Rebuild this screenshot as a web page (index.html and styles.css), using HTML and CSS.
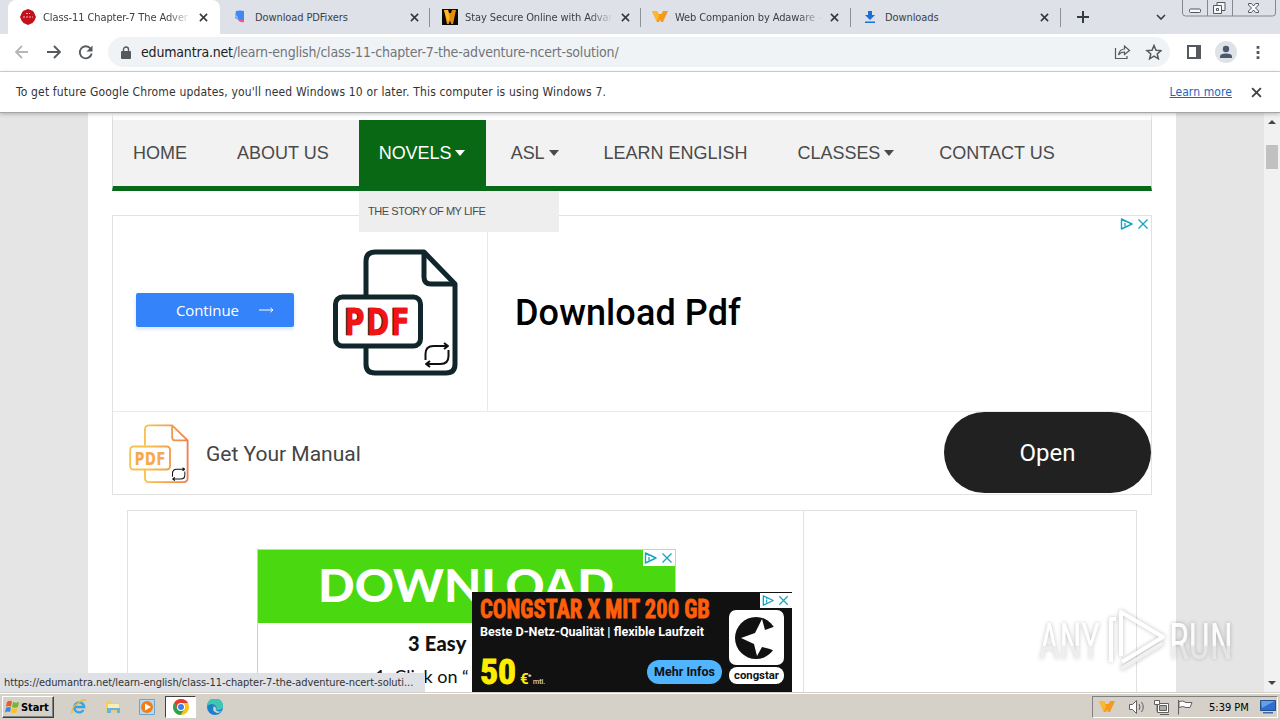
FILE: index.html
```
<!DOCTYPE html>
<html lang="en">
<head>
    <meta charset="UTF-8">
    <meta name="viewport" content="width=device-width, initial-scale=1.0">
    <title>Class-11 Chapter-7 The Adventure</title>
    <link rel="stylesheet" href="styles.css">
</head>
<body>

    <!-- Shared icons -->
    <svg class="sprite">
        <symbol id="x" viewBox="0 0 10 10"><path d="M1 1l8 8M9 1l-8 8" fill="none" stroke="currentColor" stroke-width="1.7"/></symbol>
        <symbol id="w" viewBox="0 0 16 12"><path d="M0 0h5l1.500 3H9.500L11 0h5l-5 11H9L8 8.500 7 11H5z" fill="#f79a1c"/><path d="M0 0h5l2 5-2 5z" fill="#fdb92a"/></symbol>
        <symbol id="adchoices" viewBox="0 0 32 16">
            <path d="M2.500 3v10L13 8z" fill="none" stroke="currentColor" stroke-width="1.400" stroke-linejoin="round"/>
            <path d="M6 7v3.500M6 5v1" stroke="currentColor" stroke-width="1.300"/>
            <path d="M19.500 3.500l9 9M28.500 3.500l-9 9" stroke="currentColor" stroke-width="1.300"/>
        </symbol>
        <symbol id="sync" viewBox="0 0 26 26">
            <path d="M1.500 18v-6q0-8 8-8h14M20 1l4 3-4 3M24.500 8v6q0 8-8 8H2M6 19l-4 3 4 3" fill="none" stroke="#111" stroke-width="2"/>
        </symbol>
    </svg>

    <!-- Tab strip -->
    <div class="tabs">
        <div class="tab active">
            <svg class="favicon" viewBox="0 0 16 16"><path d="M8 0l2.500 1 2.500 1 1.500 2.500L16 8l-1.500 3.500L12.500 14 8 16l-4.500-2-2-2.500L0 8l1.500-3.500L3 2l2.500-1z" fill="#c3111c"/><path d="M3 8h10M6 4.500h4" stroke="#f3b5b5" stroke-width="1" stroke-dasharray="2 1"/></svg>
            <span class="tab-title fade">Class-11 Chapter-7 The Adver</span>
            <svg class="close"><use href="#x"/></svg>
        </div>
        <div class="tab">
            <svg class="favicon" viewBox="0 0 16 16"><path d="M4 2q4-1 8 0v9H7L3 9z" fill="#4388f2"/><path d="M3 5l3 3v2L3 8z" fill="#8db8f8"/><path d="M6 11h6v2q-4 1-6-2z" fill="#ef5a86"/></svg>
            <span class="tab-title">Download PDFixers</span>
            <svg class="close"><use href="#x"/></svg>
        </div>
        <div class="tab">
            <svg class="favicon" viewBox="0 0 16 16"><path d="M0 0h16v16H0z" fill="#0c0a06"/><path d="M2 1h4l1 3h2l1-3h4l-3 14H9.300L8 11.500 6.700 15H5z" fill="#e88c0e"/><path d="M2 1h4l1.500 8L6 14z" fill="#fdb92a"/></svg>
            <span class="tab-title fade">Stay Secure Online with Advar</span>
            <svg class="close"><use href="#x"/></svg>
        </div>
        <div class="tab">
            <svg class="favicon" viewBox="0 -2 16 16"><use href="#w" width="16" height="12"/></svg>
            <span class="tab-title fade">Web Companion by Adaware -</span>
            <svg class="close"><use href="#x"/></svg>
        </div>
        <div class="tab">
            <svg class="favicon" viewBox="0 0 16 16"><path d="M6 2h4v4h3l-5 5-5-5h3zM3 12.500h10V14H3z" fill="#1b6fd8"/></svg>
            <span class="tab-title">Downloads</span>
            <svg class="close"><use href="#x"/></svg>
        </div>
        <svg class="plus" viewBox="0 0 12 12"><path d="M6 0v12M0 6h12" stroke="#333b45" stroke-width="2"/></svg>
        <svg class="chevron" viewBox="0 0 10 6"><path d="M1 1l4 4 4-4" fill="none" stroke="#333b45" stroke-width="1.600"/></svg>
        <svg class="window-buttons" viewBox="0 0 94 17">
            <path d="M.5 0v13q0 3 3 3h87q3 0 3-3V0M25.500 0v16M50.500 0v16" fill="none" stroke="#85888d"/>
            <g fill="#f7f8fa" stroke="#55585e">
                <rect x="7.500" y="9" width="11" height="3.500" rx="1"/>
                <path d="M35 2.500h8v8h-8z"/><path d="M31.500 5.500h8v8h-8zM34.500 8.500h2v2h-2z"/>
                <path d="M66.500 3.500h3l2 2.500 2-2.500h3v1.500L73.500 8l3 3v1.500h-3l-2-2.500-2 2.500h-3V11l3-3-3-3z"/>
            </g>
        </svg>
    </div>

    <!-- Toolbar -->
    <div class="toolbar">
        <svg class="arrows" viewBox="0 0 80 16" fill="none" stroke-width="1.800">
            <path d="M14 8H2M8 2L2 8l6 6" stroke="#b4b6b9"/>
            <path d="M33 8h12M40 2l6 6-6 6" stroke="#55585c"/>
            <path d="M76.500 4.500a6 6 0 1 0 1.200 5" stroke="#55585c"/><path d="M78.500 1.500v6h-6z" fill="#55585c"/>
        </svg>
        <div class="address">
            <svg class="lock" viewBox="0 0 10 13"><path d="M1 5h8q1 0 1 1v6q0 1-1 1H1q-1 0-1-1V6q0-1 1-1z" fill="#55585c"/><path d="M2.500 6V3.500a2.500 2.500 0 0 1 5 0V6" fill="none" stroke="#55585c" stroke-width="1.400"/></svg>
            <span class="url"><b>edumantra.net</b>/learn-english/class-11-chapter-7-the-adventure-ncert-solution/</span>
            <svg class="share" viewBox="0 0 48 16" fill="none" stroke="#55585c" stroke-width="1.200">
                <path d="M1.500 4v10.500H13V12M4.500 11q1-6 6-6V2l5 4.500-5 4V8q-4 0-6 3z"/>
                <path d="M40 1.500l2 4.700 5 .4-3.800 3.300 1.200 4.900L40 12.200l-4.400 2.600 1.200-4.900L33 6.600l5-.4z" stroke-width="1.500"/>
            </svg>
        </div>
        <svg class="side" viewBox="0 0 14 14"><path d="M1 1h12v12H1z" fill="none" stroke="#55585c" stroke-width="2"/><path d="M9 1h4v12H9z" fill="#55585c"/></svg>
        <svg class="profile" viewBox="0 0 22 22"><circle cx="11" cy="11" r="11" fill="#dfe2e7"/><circle cx="11" cy="8" r="3.200" fill="#4c5770"/><path d="M5 17v-1.500q0-3 6-3t6 3V17z" fill="#4c5770"/></svg>
        <svg class="dots" viewBox="0 0 4 14" fill="#55585c"><path d="M.5 0h3v3h-3zM.5 5.500h3v3h-3zM.5 11h3v3h-3z"/></svg>
    </div>

    <!-- Update notice -->
    <div class="infobar">
        <span class="notice">To get future Google Chrome updates, you'll need Windows 10 or later. This computer is using Windows 7.</span>
        <a class="learn" href="#">Learn more</a>
        <svg class="info-close"><use href="#x"/></svg>
    </div>

    <!-- Web page -->
    <div class="view">
        <div class="page">
            <nav class="nav">
                <a class="item">HOME</a>
                <a class="item">ABOUT US</a>
                <a class="item open">NOVELS<i class="caret"></i></a>
                <a class="item">ASL<i class="caret"></i></a>
                <a class="item">LEARN ENGLISH</a>
                <a class="item">CLASSES<i class="caret"></i></a>
                <a class="item">CONTACT US</a>
                <div class="submenu">THE STORY OF MY LIFE</div>
            </nav>

            <div class="ad">
                <div class="ad-top">
                    <div class="ad-media">
                        <div class="continue">Continue
                            <svg class="arrow" viewBox="0 0 15 6"><path d="M0 3h14M11.500.800L14 3l-2.500 2.200" fill="none" stroke="#fff" stroke-width="1"/></svg>
                        </div>
                        <svg class="pdf" viewBox="0 0 128 128" fill="none" stroke="#10262b" stroke-width="5" stroke-linejoin="round">
                            <path d="M34 46V12q0-9 9-9h49l31 32v80q0 9-9 9H43q-9 0-9-9V98"/>
                            <path d="M92 3v25q0 7 7 7h24"/>
                            <rect x="3.500" y="48" width="85" height="49" rx="7"/>
                            <text class="pdf-shadow" x="11.500" y="86" textLength="67" lengthAdjust="spacingAndGlyphs">PDF</text>
                            <text class="pdf-text" x="12.500" y="86" textLength="67" lengthAdjust="spacingAndGlyphs">PDF</text>
                            <use href="#sync" x="92" y="93" width="26" height="26"/>
                        </svg>
                    </div>
                    <div class="ad-title">Download Pdf</div>
                    <svg class="choices"><use href="#adchoices"/></svg>
                </div>
                <div class="ad-bottom">
                    <svg class="pdf-small" viewBox="0 0 128 128" fill="none" stroke="url(#warm)" stroke-width="4" stroke-linejoin="round">
                        <defs><linearGradient id="warm" gradientUnits="userSpaceOnUse" x1="0" y1="0" x2="128" y2="0"><stop offset=".3" stop-color="#f8c24e"/><stop offset="1" stop-color="#f08050"/></linearGradient></defs>
                        <path d="M34 46V12q0-9 9-9h49l33 32v80q0 9-9 9H43q-9 0-9-9V98M92 3v25q0 7 7 7h26"/>
                        <rect x="2.500" y="48" width="85" height="49" rx="7"/>
                        <text class="pdf-warm" x="12" y="87" textLength="67" lengthAdjust="spacingAndGlyphs">PDF</text>
                        <use href="#sync" x="91" y="92" width="30" height="30"/>
                    </svg>
                    <span class="manual">Get Your Manual</span>
                    <a class="open-btn">Open</a>
                </div>
            </div>

            <div class="content">
                <div class="main">
                    <div class="green-ad">
                        <svg class="choices boxed"><use href="#adchoices"/></svg>
                        <div class="download"><svg viewBox="0 0 417 73"><text x="60" y="52" textLength="296" lengthAdjust="spacingAndGlyphs">DOWNLOAD</text></svg></div>
                        <div class="steps">3 Easy</div>
                        <div class="step">1. Click on “</div>
                    </div>
                </div>
                <div class="sidebar"></div>
            </div>
        </div>

        <div class="scroll"><i class="up"></i><i class="thumb"></i><i class="down"></i></div>

        <!-- Sticky banner -->
        <div class="banner">
            <svg viewBox="0 0 320 100">
                <text class="headline" x="8" y="26" textLength="230" lengthAdjust="spacingAndGlyphs">CONGSTAR X MIT 200 GB</text>
                <text class="subline" x="8" y="44" textLength="224" lengthAdjust="spacingAndGlyphs">Beste D-Netz-Qualität | flexible Laufzeit</text>
                <text class="price" x="8" y="92" textLength="36" lengthAdjust="spacingAndGlyphs">50</text>
                <text class="euro" x="48" y="92">€</text>
                <text class="tiny" x="56" y="87">*</text>
                <text class="tiny" x="61" y="92" textLength="12" lengthAdjust="spacingAndGlyphs">mtl.</text>
                <rect x="175" y="68" width="75" height="24" rx="12" fill="#50b4ff"/>
                <text class="more" x="182" y="84" textLength="61" lengthAdjust="spacingAndGlyphs">Mehr Infos</text>
                <rect x="257" y="18" width="55" height="55" rx="7" fill="#fff"/>
                <circle cx="284" cy="46" r="21" fill="#111"/>
                <path d="M290 27l3 11 14-5v28l-9-4-8-2-5 9-3-12-13-6 14-5z" fill="#fff"/>
                <rect x="257" y="75" width="55" height="17" rx="8" fill="#fff"/>
                <text class="brand" x="262" y="87" textLength="45" lengthAdjust="spacingAndGlyphs">congstar</text>
            </svg>
            <svg class="choices boxed"><use href="#adchoices"/></svg>
        </div>

        <div class="status">https://edumantra.net/learn-english/class-11-chapter-7-the-adventure-ncert-soluti...</div>

        <svg class="watermark" viewBox="0 0 200 70">
            <defs><linearGradient id="fade" x1="0" y1="0" x2="0" y2="1"><stop offset=".55" stop-color="#fff"/><stop offset=".58" stop-color="#eee" stop-opacity=".75"/></linearGradient></defs>
            <text x="2" y="52" textLength="61" lengthAdjust="spacingAndGlyphs">ANY</text>
            <g fill="none" stroke="#fff" stroke-width="4" stroke-linejoin="round"><path d="M74 55V12h5M84 49V5l42 25-41 25"/><path d="M84 62l42-26" stroke="#eee"/></g>
            <text x="132" y="52" textLength="64" lengthAdjust="spacingAndGlyphs">RUN</text>
        </svg>
    </div>

    <!-- Taskbar -->
    <div class="taskbar">
        <div class="start">
            <svg viewBox="0 0 16 16"><path d="M2 3q3-2 5-.500L6 7.500q-3-1-5 .5z" fill="#ec5b25"/><path d="M8 3q3 1.500 6 0l-1 5q-3 1.500-6 0z" fill="#72b72d"/><path d="M1 9q2-1.500 5-.500L5 13q-2.500-1-5 .5z" fill="#3b88dc"/><path d="M7 9q3 1.500 5.500 0l-1 4.500q-3 1.500-5.500 0z" fill="#f8c329"/></svg>
            Start
        </div>
        <div class="launch">
            <svg viewBox="0 0 16 16"><path d="M12.500 11a5 5 0 1 1 .7-3H4" fill="none" stroke="#38a2e2" stroke-width="2.400"/><path d="M1 14Q0 9 7 4t8-2" fill="none" stroke="#e8bc38" stroke-width="1.300"/></svg>
        </div>
        <div class="launch">
            <svg viewBox="0 0 16 16"><path d="M1 2h5l1 2h7v9H1z" fill="#f0cf68"/><path d="M3 5h11v4H3z" fill="#fbeeb4"/><path d="M2 9h13v5h-3v-3H6v3H2z" fill="#67b3e2"/></svg>
        </div>
        <div class="launch">
            <svg viewBox="0 0 16 16"><path d="M.5.5h15v15H.5z" fill="#b9d8ee" stroke="#6ca4cc"/><circle cx="8" cy="8" r="6" fill="#f07d18"/><path d="M6 4.500v7L12 8z" fill="#fff"/></svg>
        </div>
        <div class="launch pressed">
            <svg viewBox="0 0 16 16"><circle cx="8" cy="8" r="8" fill="#fbc116"/><path d="M1.100 4A8 8 0 0 1 15 4H8L4.500 10z" fill="#e33b2e"/><path d="M1.100 4A8 8 0 0 0 7.500 16L11.500 10 8 12 4.500 10z" fill="#2da14c"/><circle cx="8" cy="8" r="4" fill="#fff"/><circle cx="8" cy="8" r="3" fill="#3d7fe8"/></svg>
        </div>
        <div class="launch">
            <svg viewBox="0 0 16 16"><circle cx="8" cy="8" r="8" fill="#1b80cc"/><path d="M0 7a8 8 0 0 1 16 0q0 4-5 4-2 0-2-1 1-1 0-3Q5 3 0 7z" fill="#3fc6b0"/><path d="M7 7q-3 5 3 7 3 0 5-2-2 1-5 0-2-1-1-3z" fill="#d5d0c8"/></svg>
        </div>
        <div class="tray">
            <svg class="tray-w"><use href="#w"/></svg>
            <svg class="tray-icons" viewBox="0 0 66 16" fill="#fff" stroke="#606060">
                <path d="M1.500 5.500h3l4-4v13l-4-4h-3z"/><path d="M11 5q2 3 0 6M13.500 3q3.500 5 0 10" fill="none"/>
                <path d="M29.500 4.500h11v9h-11z"/><path d="M31.500 6.500h7v5h-7z" fill="#aaa"/><path d="M26.500 1.500h5v4h-5zM29 5.500v7M32 15.500h9" />
                <path d="M50.500 1v14.500M51 2.500q4-1.500 7 1h6l-2 5h-4q-3-2-7 0z"/>
            </svg>
            <span class="clock">5:39 PM</span>
            <svg class="desk" viewBox="0 0 16 14"><path d="M.5.500h15v10H.5z" fill="#2d6fd0" stroke="#264f8c"/><path d="M1 1h14L2 8z" fill="#659fe6"/><path d="M3 12h10v1.500H3z" fill="#3c6cab"/></svg>
        </div>
    </div>

</body>
</html>
```
FILE: styles.css
```
/* General */
* {
    box-sizing: border-box;
}

body {
    margin: 0;
    width: 1280px;
    height: 720px;
    overflow: hidden;
    display: flex;
    flex-direction: column;
    font-family: "DejaVu Sans Condensed", "DejaVu Sans", sans-serif;
    font-stretch: condensed;
    font-size: 12px;
    color: #333;
    background: #fff;
}

svg {
    display: block;
    flex: none;
}

.sprite {
    display: none;
}

/* Tab strip */
.tabs {
    height: 34px;
    flex: none;
    display: flex;
    align-items: center;
    background: #dee1e8;
}

.tab {
    width: 210px;
    height: 34px;
    flex: none;
    display: flex;
    align-items: center;
    padding: 0 11px 0 12px;
    position: relative;
}

.tab:not(.active)::after {
    content: "";
    position: absolute;
    right: -1px;
    top: 8px;
    width: 1px;
    height: 19px;
    background: #8c9097;
}

.tab.active + .tab::after {
    right: 0;
}

.tab.active {
    width: 212px;
    margin-left: 8px;
    background: #fff;
    border-radius: 8px 8px 0 0;
}

.favicon {
    width: 16px;
    height: 16px;
    margin-right: 7px;
}

.tab-title {
    width: 148px;
    margin-right: 8px;
    white-space: nowrap;
    font-size: 11px;
    letter-spacing: -0.1px;
    color: #3c4043;
}

.tab-title.fade {
    -webkit-mask-image: linear-gradient(90deg, #000 84%, transparent);
    mask-image: linear-gradient(90deg, #000 84%, transparent);
}

.close {
    width: 9px;
    height: 9px;
    color: #33373c;
}

.plus {
    width: 12px;
    height: 12px;
    margin-left: 17px;
}

.chevron {
    width: 10px;
    height: 6px;
    margin-left: 67px;
}

.window-buttons {
    width: 94px;
    height: 17px;
    margin-left: 16px;
    align-self: flex-start;
}

/* Toolbar */
.toolbar {
    height: 38px;
    flex: none;
    display: flex;
    align-items: center;
    padding: 0 0 1px 14px;
    border-bottom: 1px solid #d4d7da;
}

.arrows {
    width: 80px;
    height: 16px;
}

.address {
    width: 1062px;
    height: 30px;
    margin-left: 14px;
    padding: 0 8px 0 13px;
    display: flex;
    align-items: center;
    border-radius: 15px;
    background: #f0f3f5;
}

.lock {
    width: 10px;
    height: 13px;
    margin-right: 10px;
}

.url {
    flex: 1;
    font-size: 14px;
    letter-spacing: -0.18px;
    color: #70757a;
}

.url b {
    font-weight: normal;
    color: #202124;
}

.share {
    width: 48px;
    height: 16px;
}

.side {
    width: 14px;
    height: 14px;
    margin-left: 17px;
}

.profile {
    width: 22px;
    height: 22px;
    margin-left: 14px;
}

.dots {
    width: 4px;
    height: 13px;
    margin-left: 19px;
}

/* Update notice */
.infobar {
    height: 41px;
    flex: none;
    display: flex;
    align-items: center;
    padding: 0 18px 0 16px;
    border-bottom: 1px solid #a4a7a7;
    position: relative;
    z-index: 2;
    box-shadow: 0 1px 4px rgba(0, 0, 0, 0.25);
}

.notice {
    flex: 1;
    letter-spacing: 0.16px;
}

.learn {
    letter-spacing: 0.1px;
    color: #1a67bd;
}

.info-close {
    width: 11px;
    height: 11px;
    margin-left: 19px;
    color: #444;
}

/* Web page */
.view {
    height: 579px;
    flex: none;
    position: relative;
    overflow: hidden;
    background: #e5e5e5;
    font-stretch: normal;
}

.page {
    width: 1088px;
    height: 579px;
    margin-left: 88px;
    padding: 0 24px;
    background: #fff;
}

.nav {
    height: 78px;
    margin-bottom: 24px;
    border: 1px solid #ddd;
    border-top: 7px solid #fff;
    border-bottom: 5px solid #09691a;
    display: flex;
    background: #f2f2f2;
    background-clip: padding-box;
    font-family: "Liberation Sans", Arial, sans-serif;
    font-size: 18px;
    color: #4a4a4a;
    position: relative;
}

.item {
    height: 66px;
    padding: 0 20px;
    margin-right: 10px;
    display: flex;
    align-items: center;
    white-space: nowrap;
}

.item:has(.caret) {
    margin-right: 5px;
    letter-spacing: -0.05px;
}

.item.open {
    width: 127px;
    background: #086813;
    color: #fff;
}

.caret {
    margin-left: 4px;
    border: 5.5px solid transparent;
    border-top: 6px solid currentColor;
    border-bottom: 0;
}

.submenu {
    position: absolute;
    left: 246px;
    top: 71px;
    z-index: 1;
    width: 200px;
    height: 41px;
    padding: 0 9px;
    line-height: 41px;
    background: #eee;
    font-size: 11px;
    letter-spacing: -0.45px;
}

/* PDF ad */
.ad {
    height: 280px;
    border: 1px solid #e2e2e2;
    font-family: Roboto, sans-serif;
}

.ad-top {
    height: 196px;
    display: flex;
    align-items: center;
    border-bottom: 1px solid #eaeaea;
    position: relative;
}

.ad-media {
    width: 375px;
    height: 195px;
    padding-left: 23px;
    display: flex;
    align-items: center;
    border-right: 1px solid #eaeaea;
}

.continue {
    width: 158px;
    height: 34px;
    margin: -8px 38px 0 0;
    padding-left: 40px;
    display: flex;
    align-items: center;
    background: #3583fa;
    border-radius: 2px;
    box-shadow: 0 2px 4px #d3e3fc;
    color: #fff;
    font-family: "Open Sans", sans-serif;
    font-size: 15px;
    letter-spacing: -0.1px;
}

.arrow {
    width: 15px;
    height: 6px;
    margin-left: 20px;
}

.pdf {
    width: 128px;
    height: 128px;
    margin-top: -1px;
}

.pdf text,
.pdf-small text {
    font-family: "DejaVu Sans", sans-serif;
    font-stretch: condensed;
    font-weight: bold;
    font-size: 37px;
    letter-spacing: 2px;
    stroke-width: 0.3;
}

.pdf-shadow {
    fill: #222;
    stroke: #222;
}

.pdf-text {
    fill: #f01414;
    stroke: #f01414;
}

.pdf-warm {
    fill: #f5a84e;
    stroke: #f5a84e;
}

.ad-title {
    margin-left: 27px;
    padding-bottom: 2px;
    font-size: 36px;
    font-weight: 500;
    letter-spacing: 0.1px;
    color: #000;
}

.choices {
    position: absolute;
    right: 0;
    top: 0;
    width: 32px;
    height: 16px;
    color: #12a5bd;
}

.choices.boxed {
    background: #fff;
}

.ad-bottom {
    height: 82px;
    padding-left: 16px;
    display: flex;
    align-items: center;
}

.pdf-small {
    width: 60px;
    height: 60px;
    margin-top: 1px;
}

.manual {
    flex: 1;
    margin: 1px 0 0 17px;
    font-size: 21px;
    color: #444;
}

.open-btn {
    width: 207px;
    height: 81px;
    margin-bottom: 1px;
    line-height: 82px;
    border-radius: 41px;
    background: #212121;
    color: #fff;
    text-align: center;
    font-size: 24px;
}

/* Content */
.content {
    height: 300px;
    margin: 15px 15px 0;
    border: 1px solid #e2e2e2;
    display: flex;
}

.main {
    width: 676px;
    padding: 38px 0 0 129px;
    border-right: 1px solid #e2e2e2;
}

.green-ad {
    width: 419px;
    height: 250px;
    border: 1px solid #ccc;
    position: relative;
    font-family: Lato, sans-serif;
    color: #111;
}

.download {
    height: 73px;
    background: #4ad810;
    font-weight: 900;
    font-size: 46px;
}

.download text {
    fill: #fff;
}

.download svg {
    height: 73px;
}

.steps {
    margin-top: 7px;
    padding-left: 150px;
    font-size: 20px;
    font-weight: 900;
    letter-spacing: 0.2px;
    line-height: 26px;
}

.step {
    margin-top: 7px;
    padding-left: 117px;
    font-size: 18px;
    line-height: 26px;
    white-space: nowrap;
}

/* Scrollbar */
.scroll {
    position: absolute;
    right: 0;
    top: 0;
    width: 16px;
    height: 579px;
    display: flex;
    flex-direction: column;
    align-items: center;
    background: #f1f1f1;
}

.up,
.down {
    border: 4px solid transparent;
}

.up {
    margin-top: 7px;
    border-top: 0;
    border-bottom-color: #444;
}

.thumb {
    width: 12px;
    height: 24px;
    margin: 21px 0 auto;
    background: #c1c1c1;
}

.down {
    margin-bottom: 7px;
    border-bottom: 0;
    border-top-color: #444;
}

/* Sticky banner */
.banner {
    position: absolute;
    left: 472px;
    top: 479px;
    width: 320px;
    height: 100px;
    background: #111;
    font-family: Roboto, sans-serif;
    font-weight: bold;
    fill: #fff;
}

.banner .choices {
    top: 1px;
    height: 15px;
}

.headline {
    font-stretch: condensed;
    fill: #ff5f0a;
    stroke: #ff5f0a;
    stroke-width: 0.8;
    font-size: 25px;
}

.subline {
    font-size: 12px;
}

.price {
    fill: #ffed00;
    stroke: #ffed00;
    font-stretch: condensed;
    font-size: 35px;
}

.euro {
    fill: #ffed00;
    font-size: 15px;
}

.tiny {
    font-size: 8px;
    font-weight: normal;
}

.more {
    fill: #111;
    font-size: 12px;
}

.brand {
    fill: #111;
    font-size: 11px;
}

/* Status bubble */
.status {
    position: absolute;
    left: 0;
    bottom: 0;
    width: 425px;
    height: 19px;
    padding-left: 4px;
    line-height: 20px;
    font-size: 11px;
    font-stretch: condensed;
    letter-spacing: -0.07px;
    white-space: nowrap;
    background: #dee1e6;
    border-radius: 0 3px 0 0;
}

/* Watermark */
.watermark {
    position: absolute;
    left: 1037px;
    top: 494px;
    width: 200px;
    height: 70px;
    filter: drop-shadow(0 0 2px rgba(0, 0, 0, 0.3));
    font-family: Roboto, sans-serif;
    font-stretch: condensed;
    font-size: 50px;
    opacity: 0.85;
}

.watermark text {
    fill: url(#fade);
}

/* Taskbar */
.taskbar {
    height: 28px;
    flex: none;
    display: flex;
    align-items: center;
    padding: 1px 2px 0;
    border-top: 1px solid #d4d0c8;
    box-shadow: inset 0 1px #fff;
    background: #d5d0c8;
}

.start {
    width: 52px;
    height: 22px;
    padding-left: 2px;
    display: flex;
    align-items: center;
    border: 1px solid;
    border-color: #fff #404040 #404040 #fff;
    box-shadow: inset -1px -1px #808080;
    font-size: 11px;
    font-weight: bold;
    letter-spacing: -0.1px;
    color: #000;
}

.start svg {
    width: 16px;
    height: 16px;
}

.launch {
    width: 31px;
    height: 22px;
    margin-right: 3px;
    display: flex;
    align-items: center;
    justify-content: center;
}

.start + .launch {
    margin-left: 9px;
}

.launch svg {
    width: 16px;
    height: 16px;
}

.launch.pressed {
    background: #fff;
    border: 1px solid;
    border-color: #404040 #fff #fff #404040;
}

.tray {
    width: 186px;
    height: 22px;
    margin-left: auto;
    padding-left: 6px;
    display: flex;
    align-items: center;
    border: 1px solid;
    border-color: #808080 #fff #fff #808080;
    font-size: 11px;
    color: #000;
}

.tray-w {
    width: 16px;
    height: 12px;
}

.tray-icons {
    width: 66px;
    height: 16px;
    margin-left: 13px;
}

.clock {
    margin-left: 15px;
    white-space: nowrap;
}

.desk {
    width: 16px;
    height: 14px;
    margin-left: auto;
    margin-right: 1px;
}
```
